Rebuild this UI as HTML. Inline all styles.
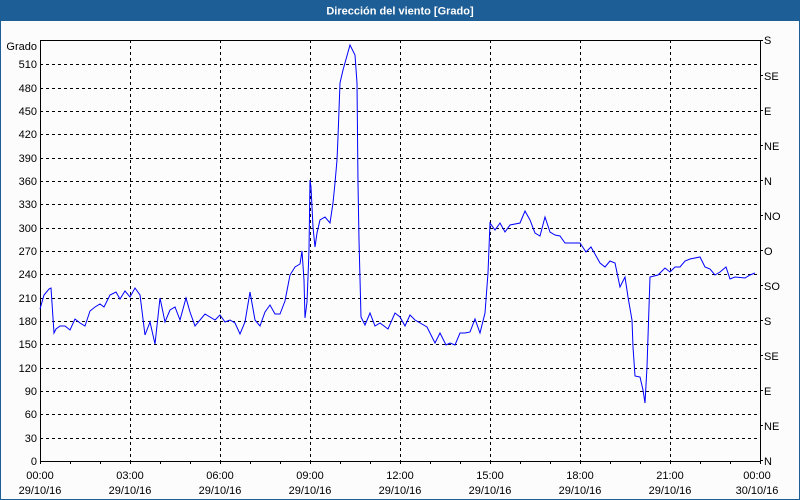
<!DOCTYPE html>
<html><head><meta charset="utf-8"><style>
html,body{margin:0;padding:0;width:800px;height:500px;overflow:hidden;background:#fff}
svg{display:block}
text{font-family:"Liberation Sans","DejaVu Sans",sans-serif;font-size:11px;fill:#000}
</style></head><body>
<svg width="800" height="500" viewBox="0 0 800 500" xmlns="http://www.w3.org/2000/svg">
<rect x="0" y="0" width="800" height="500" fill="#1e5e96"/>
<rect x="1" y="21" width="798" height="478" fill="#fcfcfc"/>
<text x="400" y="14.5" text-anchor="middle" style="fill:#fff;font-weight:bold;font-size:11px">Dirección del viento [Grado]</text>
<g stroke="#000" stroke-width="1" stroke-dasharray="3,3" shape-rendering="crispEdges">
<line x1="40" x2="760" y1="64.5" y2="64.5"/><line x1="40" x2="760" y1="88.5" y2="88.5"/><line x1="40" x2="760" y1="111.5" y2="111.5"/><line x1="40" x2="760" y1="134.5" y2="134.5"/><line x1="40" x2="760" y1="158.5" y2="158.5"/><line x1="40" x2="760" y1="181.5" y2="181.5"/><line x1="40" x2="760" y1="204.5" y2="204.5"/><line x1="40" x2="760" y1="228.5" y2="228.5"/><line x1="40" x2="760" y1="251.5" y2="251.5"/><line x1="40" x2="760" y1="274.5" y2="274.5"/><line x1="40" x2="760" y1="298.5" y2="298.5"/><line x1="40" x2="760" y1="321.5" y2="321.5"/><line x1="40" x2="760" y1="344.5" y2="344.5"/><line x1="40" x2="760" y1="368.5" y2="368.5"/><line x1="40" x2="760" y1="391.5" y2="391.5"/><line x1="40" x2="760" y1="414.5" y2="414.5"/><line x1="40" x2="760" y1="438.5" y2="438.5"/>
<line x1="130.5" x2="130.5" y1="40" y2="461"/><line x1="220.5" x2="220.5" y1="40" y2="461"/><line x1="310.5" x2="310.5" y1="40" y2="461"/><line x1="400.5" x2="400.5" y1="40" y2="461"/><line x1="490.5" x2="490.5" y1="40" y2="461"/><line x1="580.5" x2="580.5" y1="40" y2="461"/><line x1="670.5" x2="670.5" y1="40" y2="461"/>
</g>
<g stroke="#000" stroke-width="1" shape-rendering="crispEdges" fill="none">
<path d="M40.5 40.5H760.5V461.5H40.5Z"/>
<path d="M40.5 461v3M70.5 461v3M100.5 461v3M130.5 461v3M160.5 461v3M190.5 461v3M220.5 461v3M250.5 461v3M280.5 461v3M310.5 461v3M340.5 461v3M370.5 461v3M400.5 461v3M430.5 461v3M460.5 461v3M490.5 461v3M520.5 461v3M550.5 461v3M580.5 461v3M610.5 461v3M640.5 461v3M670.5 461v3M700.5 461v3M730.5 461v3M760.5 461v3"/>
<path d="M760 40.5h3M760 75.5h3M760 110.5h3M760 145.5h3M760 180.5h3M760 215.5h3M760 250.5h3M760 285.5h3M760 320.5h3M760 355.5h3M760 390.5h3M760 425.5h3M760 460.5h3"/>
</g>
<polyline fill="none" stroke="#0000ff" stroke-width="1" points="40,309 44,295 49,289 51,288 54,333 56,329 60,326 65,326 70,330 75,319 80,323 85,326 90,311 95,307 100,304 104,307 110,295 116,292 120,299 125,291 130,297 135,288 140,295 145,335 150,322 155,344 160,298 165,322 170,310 175,307 180,320 186,298 190,312 195,326 205,314 215,320 220,315 225,322 230,320 235,323 240,334 245,322 250,292 255,320 260,326 265,312 270,305 275,314 280,314 285,301 290,275 295,267 300,264 302,251 304,280 305,318 307,302 308,277 309,250 310,180 311,187 313,227 315,247 317,233 320,220 325,217 330,223 333,203 335,183 337,160 338,137 340,83 343,70 350,45 355,55 357,83 358,183 359,240 361,317 365,325 370,313 375,326 380,323 388,329 395,313 400,317 405,326 410,315 415,320 427,327 435,343 440,333 446,345 450,343 455,345 460,333 465,333 470,332 475,319 480,333 485,313 488,273 490,223 495,230 500,223 505,232 510,225 520,223 525,211 530,220 535,233 540,236 545,217 550,232 555,235 560,236 565,243 572,243 580,243 586,252 591,247 600,263 605,267 610,261 615,263 620,287 625,277 628,297 632,320 633,347 635,376 640,377 643,390 645,403 647,367 650,277 658,275 665,268 670,272 675,267 680,267 685,261 690,259 700,257 705,267 710,269 715,275 720,272 726,267 730,279 735,277 745,278 750,275 755,273"/>
<g text-anchor="end">
<text x="37" y="50">Grado</text>
<text x="37" y="68">510</text><text x="37" y="92">480</text><text x="37" y="115">450</text><text x="37" y="138">420</text><text x="37" y="162">390</text><text x="37" y="185">360</text><text x="37" y="208">330</text><text x="37" y="232">300</text><text x="37" y="255">270</text><text x="37" y="278">240</text><text x="37" y="302">210</text><text x="37" y="325">180</text><text x="37" y="348">150</text><text x="37" y="372">120</text><text x="37" y="395">90</text><text x="37" y="418">60</text><text x="37" y="442">30</text><text x="37" y="465">0</text>
</g>
<g>
<text x="764" y="44">S</text><text x="764" y="80">SE</text><text x="764" y="115">E</text><text x="764" y="150">NE</text><text x="764" y="185">N</text><text x="764" y="220">NO</text><text x="764" y="255">O</text><text x="764" y="290">SO</text><text x="764" y="325">S</text><text x="764" y="360">SE</text><text x="764" y="395">E</text><text x="764" y="430">NE</text><text x="764" y="465">N</text>
</g>
<g text-anchor="middle">
<text x="40" y="479">00:00</text><text x="40" y="494">29/10/16</text>
<text x="130" y="479">03:00</text><text x="130" y="494">29/10/16</text>
<text x="220" y="479">06:00</text><text x="220" y="494">29/10/16</text>
<text x="310" y="479">09:00</text><text x="310" y="494">29/10/16</text>
<text x="400" y="479">12:00</text><text x="400" y="494">29/10/16</text>
<text x="490" y="479">15:00</text><text x="490" y="494">29/10/16</text>
<text x="580" y="479">18:00</text><text x="580" y="494">29/10/16</text>
<text x="670" y="479">21:00</text><text x="670" y="494">29/10/16</text>
<text x="757" y="479">00:00</text><text x="757" y="494">30/10/16</text>
</g>
</svg>
</body></html>
